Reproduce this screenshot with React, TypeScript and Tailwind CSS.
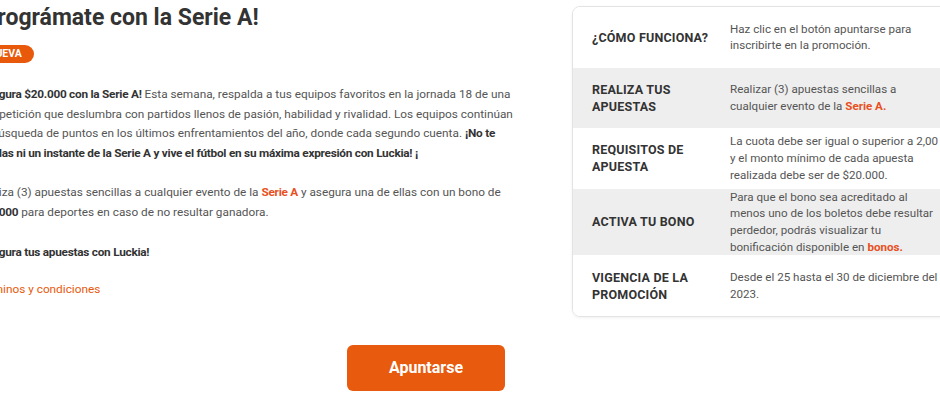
import React from "react";

const rows = [
  {
    label: "¿CÓMO FUNCIONA?",
    value: <>Haz clic en el botón apuntarse para inscribirte en la promoción.</>,
    gray: false,
  },
  {
    label: "REALIZA TUS APUESTAS",
    value: (
      <>
        Realizar (3) apuestas sencillas a cualquier evento de la{" "}
        <b className="text-[#e8501e]">Serie A.</b>
      </>
    ),
    gray: true,
  },
  {
    label: "REQUISITOS DE APUESTA",
    value: (
      <>
        La cuota debe ser igual o superior a 2,00 y el monto mínimo de cada apuesta realizada
        debe ser de $20.000.
      </>
    ),
    gray: false,
  },
  {
    label: "ACTIVA TU BONO",
    value: (
      <>
        Para que el bono sea acreditado al menos uno de los boletos debe resultar perdedor,
        podrás visualizar tu bonificación disponible en{" "}
        <b className="text-[#e8501e]">bonos.</b>
      </>
    ),
    gray: true,
  },
  {
    label: "VIGENCIA DE LA PROMOCIÓN",
    value: <>Desde el 25 hasta el 30 de diciembre del 2023.</>,
    gray: false,
  },
];

export default function App() {
  return (
    <div className="w-[940px] h-[400px] overflow-hidden bg-white font-['Roboto',sans-serif]">
      <div className="flex gap-[52px] ml-[-24px] w-[1000px]">
        {/* left column */}
        <div className="w-[544px] shrink-0 pt-[4px]">
          <h1 className="text-[23px] leading-[28px] font-bold text-[#333]">
            ¡Prográmate con la Serie A!
          </h1>

          <span className="inline-block mt-[13px] bg-[#e8590c] text-white text-[10.5px] font-bold leading-[18px] px-[12px] rounded-full">
            NUEVA
          </span>

          <div className="mt-[21px] text-[11.8px] leading-[19.6px] text-[#555]">
            <p>
              <b className="text-[#333] tracking-[-0.25px]">¡Asegura $20.000 con la Serie A!</b>{" "}
              Esta semana, respalda a tus equipos favoritos en la jornada 18 de una competición
              que deslumbra con partidos llenos de pasión, habilidad y rivalidad. Los equipos
              continúan su búsqueda de puntos en los últimos enfrentamientos del año, donde cada
              segundo cuenta.{" "}
              <b className="text-[#333] tracking-[-0.25px]">
                ¡No te pierdas ni un instante de la Serie A y vive el fútbol en su máxima
                expresión con Luckia! ¡
              </b>
            </p>

            <p className="mt-[20px]">
              Realiza (3) apuestas sencillas a cualquier evento de la{" "}
              <b className="text-[#e8501e] tracking-[-0.25px]">Serie A</b> y asegura una de
              ellas con un bono de <b className="text-[#333] tracking-[-0.25px]">$20.000</b> para
              deportes en caso de no resultar ganadora.
            </p>

            <p className="mt-[20px] font-bold text-[#333] tracking-[-0.25px]">
              ¡Asegura tus apuestas con Luckia!
            </p>

            <p className="mt-[18px]">
              <a className="text-[#e8590c]">Términos y condiciones</a>
            </p>
          </div>
        </div>

        {/* info card */}
        <div className="mt-[6px] w-[400px] shrink-0 self-start border border-[#e3e3e3] rounded-lg overflow-hidden shadow-[0_1px_3px_rgba(0,0,0,0.06)]">
          {rows.map((r) => (
            <div
              key={r.label}
              className={`flex items-center min-h-[60.5px] ${r.gray ? "bg-[#eeeeee]" : "bg-white"}`}
            >
              <div className="w-[157px] shrink-0 pl-[19px] pr-[12px] text-[12.5px] leading-[17px] font-bold text-[#333] tracking-[0.2px]">
                {r.label}
              </div>
              <div className="w-[214px] text-[11.6px] leading-[16.7px] text-[#555]">
                {r.value}
              </div>
            </div>
          ))}
        </div>
      </div>

      <div className="flex w-[852px] justify-center mt-[28px]">
        <button className="w-[158px] h-[46px] rounded-md bg-[#e85a0e] text-white text-[16px] font-bold">
          Apuntarse
        </button>
      </div>
    </div>
  );
}
